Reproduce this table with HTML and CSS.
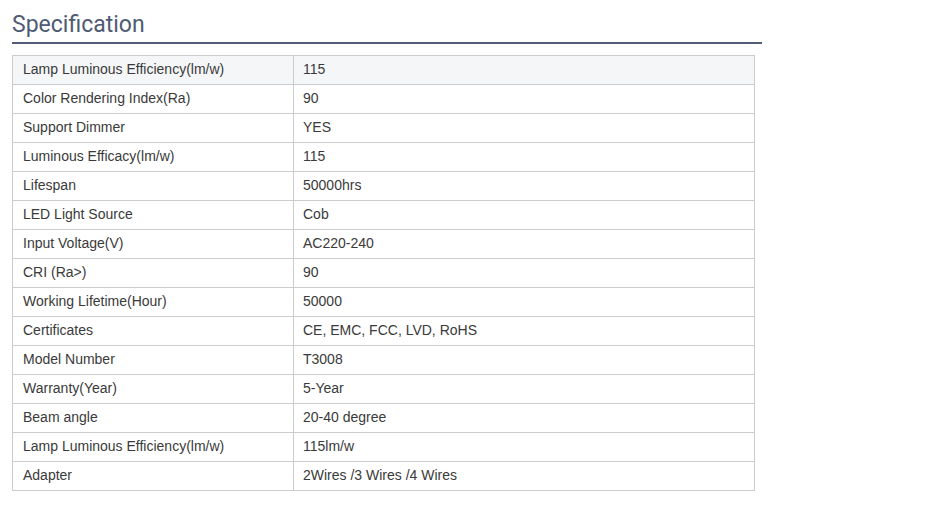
FILE: index.html
```html
<!DOCTYPE html>
<html>
<head>
<meta charset="utf-8">
<link rel="stylesheet" href="styles.css">
</head>
<body>
<div class="spec">
  <h2 class="spec-title">Specification</h2>
  <table class="spec-table">
    <tr class="first"><td class="k">Lamp Luminous Efficiency(lm/w)</td><td>115</td></tr>
    <tr><td class="k">Color Rendering Index(Ra)</td><td>90</td></tr>
    <tr><td class="k">Support Dimmer</td><td>YES</td></tr>
    <tr><td class="k">Luminous Efficacy(lm/w)</td><td>115</td></tr>
    <tr><td class="k">Lifespan</td><td>50000hrs</td></tr>
    <tr><td class="k">LED Light Source</td><td>Cob</td></tr>
    <tr><td class="k">Input Voltage(V)</td><td>AC220-240</td></tr>
    <tr><td class="k">CRI (Ra&gt;)</td><td>90</td></tr>
    <tr><td class="k">Working Lifetime(Hour)</td><td>50000</td></tr>
    <tr><td class="k">Certificates</td><td>CE, EMC, FCC, LVD, RoHS</td></tr>
    <tr><td class="k">Model Number</td><td>T3008</td></tr>
    <tr><td class="k">Warranty(Year)</td><td>5-Year</td></tr>
    <tr><td class="k">Beam angle</td><td>20-40 degree</td></tr>
    <tr><td class="k">Lamp Luminous Efficiency(lm/w)</td><td>115lm/w</td></tr>
    <tr><td class="k">Adapter</td><td>2Wires /3 Wires /4 Wires</td></tr>
  </table>
</div>
</body>
</html>
```
FILE: styles.css
```css
html, body { margin: 0; padding: 0; background: #fff; }
.spec { padding: 0 0 0 12px; width: 750px; }
.spec-title {
  margin: 0;
  font-family: Roboto, "Liberation Sans", sans-serif;
  font-weight: 400;
  font-size: 23px;
  line-height: 28px;
  padding-top: 11px;
  padding-bottom: 3px;
  color: #4f5b73;
  border-bottom: 2px solid #525e75;
}
.spec-table {
  margin-top: 11px;
  width: 743px;
  border-collapse: collapse;
  font-family: "Liberation Sans", Arial, sans-serif;
  font-size: 14px;
  color: #3a3a3a;
}
.spec-table td {
  border: 1px solid #ccc;
  height: 29px;
  padding: 0 10px 2px 10px;
  box-sizing: border-box;
  line-height: 16px;
  vertical-align: middle;
}
.spec-table td.k { width: 281px; }
.spec-table td + td { padding-left: 9px; }
.spec-table tr.first td { background: #f5f6f8; }
```
